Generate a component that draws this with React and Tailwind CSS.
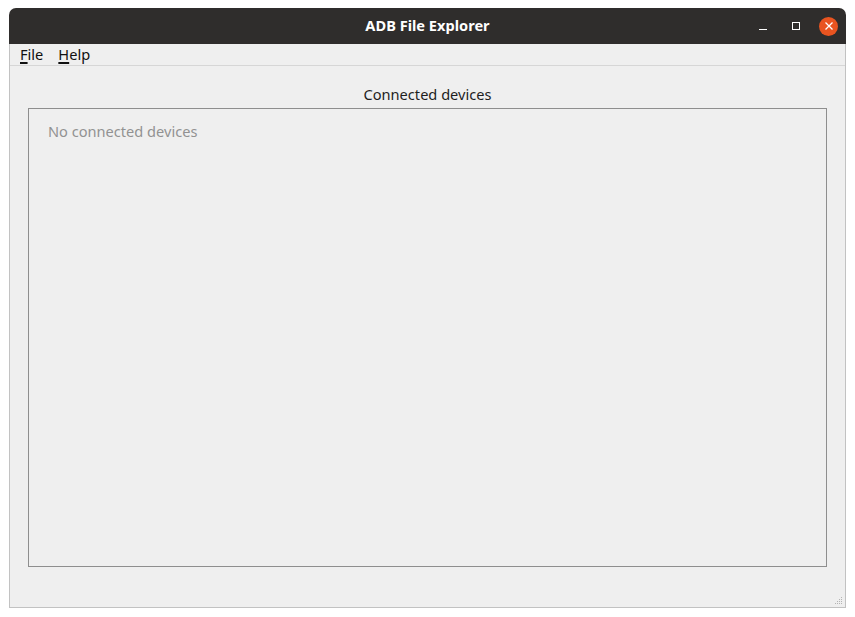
import React from 'react';

const font = { fontFamily: '"Noto Sans", "Open Sans", sans-serif' };

const TitleBar = () => (
  <div className="relative flex h-[36px] items-center justify-center rounded-t-[7px] bg-[#2f2d2c] text-white">
    <span className="text-[14.6px] font-bold">ADB File Explorer</span>
    <div className="absolute right-[8px] top-0 flex h-full items-center gap-[13px]">
      <button className="flex h-[20px] w-[20px] items-center justify-center">
        <svg width="10" height="10" viewBox="0 0 10 10">
          <rect x="1" y="8" width="8" height="1" fill="#ffffff" />
        </svg>
      </button>
      <button className="flex h-[20px] w-[20px] items-center justify-center">
        <svg width="10" height="10" viewBox="0 0 10 10">
          <rect x="1.5" y="1.5" width="7" height="7" fill="none" stroke="#ffffff" strokeWidth="1" />
        </svg>
      </button>
      <button className="flex h-[19px] w-[19px] items-center justify-center rounded-full bg-[#e95420]">
        <svg width="10" height="10" viewBox="0 0 10 10">
          <path d="M1.5 1.5 L8.5 8.5 M8.5 1.5 L1.5 8.5" stroke="#ffffff" strokeWidth="1.3" />
        </svg>
      </button>
    </div>
  </div>
);

const MenuBar = () => (
  <div className="flex h-[22px] items-center gap-[15px] border-b border-[#d6d6d6] pl-[10px] pt-[1px] text-[14.6px] text-[#111111]">
    <span>
      <span className="underline decoration-2 underline-offset-[2px]">F</span>ile
    </span>
    <span>
      <span className="underline decoration-2 underline-offset-[2px]">H</span>elp
    </span>
  </div>
);

const Grip = () => (
  <svg width="10" height="10" viewBox="0 0 10 10" className="absolute bottom-[2px] right-[2px]">
    {[
      [8, 2], [6, 4], [8, 4], [4, 6], [6, 6], [8, 6], [2, 8], [4, 8], [6, 8], [8, 8],
    ].map(([x, y], i) => (
      <rect key={i} x={x} y={y} width="1" height="1" fill="#b4b4b4" />
    ))}
  </svg>
);

export default function App() {
  return (
    <div className="h-[617px] w-full bg-white pl-[9px] pt-[8px]" style={font}>
      <div className="w-[837px]">
        <TitleBar />
        <div className="relative h-[564px] border-x border-b border-[#c2c2c2] bg-[#efefef]">
          <MenuBar />
          <div className="flex flex-col px-[18px]">
            <div className="flex h-[42px] items-end justify-center pb-[2px] text-[14.6px] text-[#1e1e1e]">
              Connected devices
            </div>
            <div className="h-[459px] border border-[#8e8e8e] px-[19px] pt-[12px] text-[14.6px] text-[#929292]">
              No connected devices
            </div>
          </div>
          <Grip />
        </div>
      </div>
    </div>
  );
}
